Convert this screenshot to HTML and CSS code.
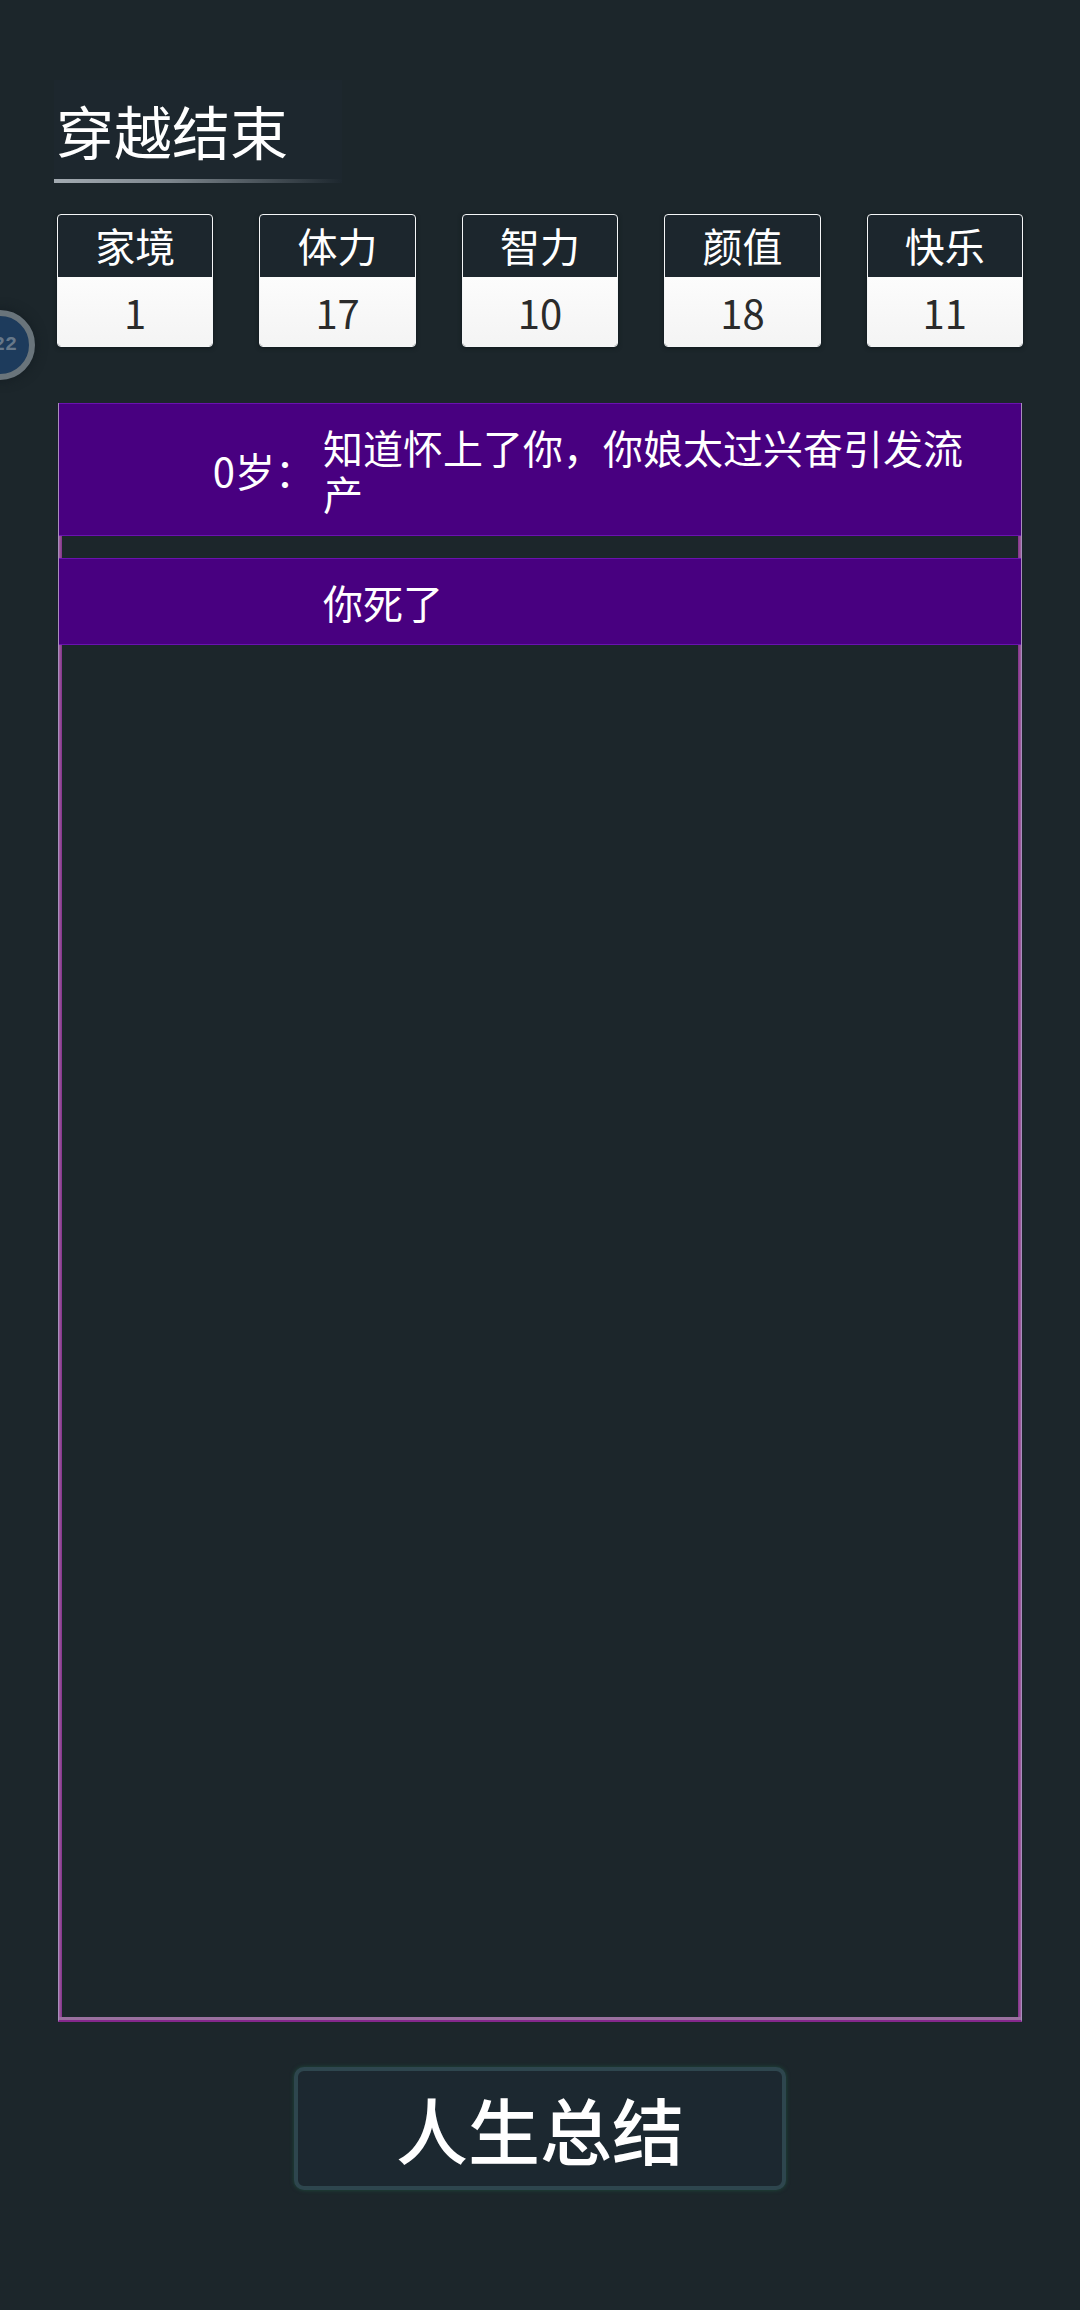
FILE: index.html
```html
<!DOCTYPE html>
<html lang="zh-CN">
<head>
<meta charset="utf-8">
<meta name="viewport" content="width=device-width, initial-scale=1">
<title>穿越结束</title>
<link rel="stylesheet" href="styles.css">
</head>
<body>
<main class="page">
  <h1 class="title">穿越结束</h1>
  <dl class="stats">
    <div class="stat"><dt class="stat-name">家境</dt><dd class="stat-value">1</dd></div>
    <div class="stat"><dt class="stat-name">体力</dt><dd class="stat-value">17</dd></div>
    <div class="stat"><dt class="stat-name">智力</dt><dd class="stat-value">10</dd></div>
    <div class="stat"><dt class="stat-name">颜值</dt><dd class="stat-value">18</dd></div>
    <div class="stat"><dt class="stat-name">快乐</dt><dd class="stat-value">11</dd></div>
  </dl>
  <ol class="events">
    <li class="event"><span class="age">0岁：</span><span class="text">知道怀上了你，你娘太过兴奋引发流产</span></li>
    <li class="event"><span class="age"></span><span class="text">你死了</span></li>
  </ol>
  <button class="summary" type="button">人生总结</button>
</main>
<div class="float-ball">22</div>
</body>
</html>
```
FILE: styles.css
```css
* {
  box-sizing: border-box;
}

body {
  margin: 0;
  background: #1c262b;
  color: #fff;
  font-family: "Noto Sans CJK SC", sans-serif;
  font-size: 40px;
  line-height: 46px;
}

.page {
  display: flex;
  flex-direction: column;
  min-height: 100vh;
  padding: 80px 57px 120px;
}

.title {
  align-self: flex-start;
  width: 288px;
  height: 103px;
  margin: 0 0 31px -3px;
  padding: 10px 2px 0;
  background: linear-gradient(90deg, #a3abb2, #7d868d 40%, #1d272e) left bottom / 100% 4px no-repeat, #1d272e;
  font-size: 58px;
  font-weight: 400;
  line-height: 80px;
}

.stats {
  display: grid;
  grid-template-columns: repeat(5, 1fr);
  gap: 46px;
  margin: 0 0 56px;
}

.stat {
  overflow: hidden;
  border: 1px solid #f4f6f7;
  border-radius: 4px;
  background: #1c262d;
  box-shadow: 0 1px 4px #10181c;
  text-align: center;
}

.stat-name {
  padding: 7px 0 9px;
}

.stat-value {
  margin: 0;
  padding: 12px 0 11px;
  background: linear-gradient(#fcfcfc, #f4f4f4);
  color: #2b2b2b;
}

.events {
  display: flex;
  flex: 1;
  flex-direction: column;
  gap: 22px;
  margin: 0 1px 45px;
  padding: 0;
  border: solid #a98dbd;
  border-width: 0 1px 2px;
  border-bottom-color: #84278c;
  background:
    linear-gradient(#9a709f, #9a709f) bottom / 100% 3px no-repeat,
    linear-gradient(90deg, #a0649f, #84308c) left / 3px 100% no-repeat,
    linear-gradient(270deg, #a0649f, #84308c) right / 3px 100% no-repeat;
  list-style: none;
}

.event {
  display: grid;
  grid-template-columns: 256px 1fr;
  gap: 8px;
  align-items: center;
  padding: 20px 48px 19px 0;
  border: solid #6a12b0;
  border-width: 1px 0;
  background: #480080;
}

.age {
  text-align: right;
}

.summary {
  align-self: center;
  width: 51%;
  min-width: 492px;
  padding: 17px 0 18px;
  border: 4px solid #2e464e;
  border-radius: 10px;
  background: #1c2830;
  box-shadow: 0 0 4px #1e4c3c;
  color: #fff;
  font: 500 72px/80px "Noto Sans CJK SC", sans-serif;
}

/* Half-hidden assistive bubble docked to the left screen edge */
.float-ball {
  position: absolute;
  top: 310px;
  left: -35px;
  width: 70px;
  height: 70px;
  padding-right: 12px;
  border: 6px solid #69747b;
  border-radius: 50%;
  background: #1d3b5c;
  box-shadow: 0 0 12px #141d22;
  color: #66788a;
  font: bold 20px/58px "Liberation Mono", monospace;
  text-align: right;
}
```
